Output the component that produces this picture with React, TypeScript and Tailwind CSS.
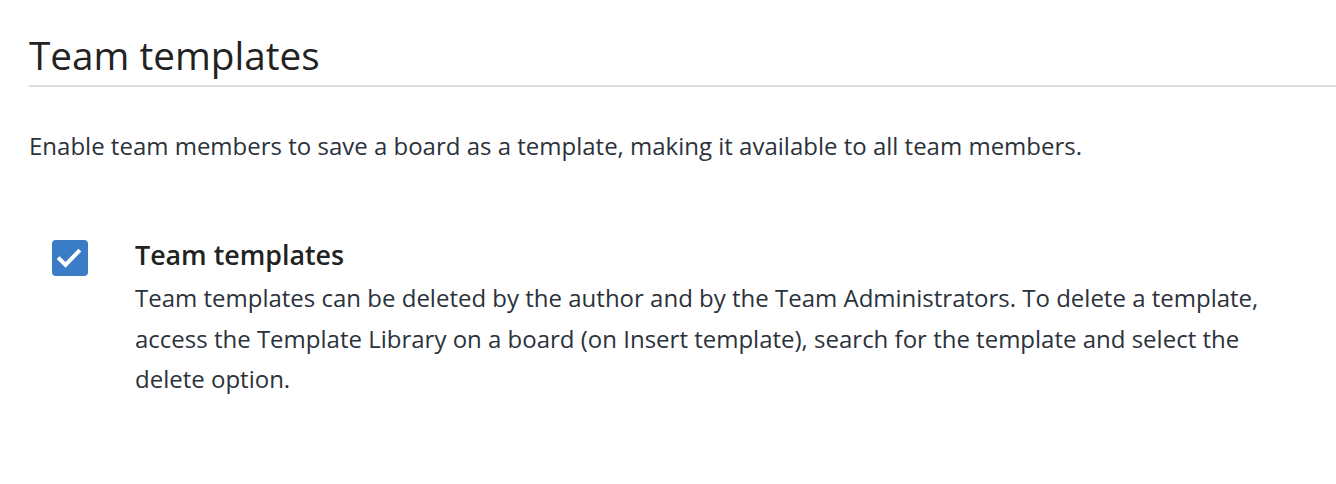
export default function App() {
  return (
    <div className="h-[484px] w-[1336px] bg-white pt-[30px] pl-[29px] font-['Open_Sans',sans-serif]">
      <h1 className="border-b-2 border-[#dddddd] pb-[5px] text-[38.7px] leading-[50px] text-[#222222]">
        Team templates
      </h1>
      <p className="mt-[44px] text-[24px] leading-[30px] text-[#2b323b]">
        Enable team members to save a board as a template, making it available to all team members.
      </p>
      <div className="mt-[74px] flex gap-[47px] pl-[23px]">
        <div className="mt-[5px] h-[36px] w-[36px] shrink-0 rounded-[4px] bg-[#3b7cc6]">
          <svg viewBox="0 0 36 36" className="h-[36px] w-[36px]">
            <path
              d="M7.5 19 L13.5 25 L26.5 11.5"
              fill="none"
              stroke="#ffffff"
              strokeWidth="4"
              strokeLinecap="square"
              strokeLinejoin="miter"
            />
          </svg>
        </div>
        <div className="w-[1150px]">
          <div className="text-[26.8px] font-semibold leading-[40px] text-[#222222]">Team templates</div>
          <p className="mt-[3px] text-[24px] leading-[40.5px] text-[#2b323b]">
            Team templates can be deleted by the author and by the Team Administrators. To delete a template,
            access the Template Library on a board (on Insert template), search for the template and select the
            delete option.
          </p>
        </div>
      </div>
    </div>
  );
}
